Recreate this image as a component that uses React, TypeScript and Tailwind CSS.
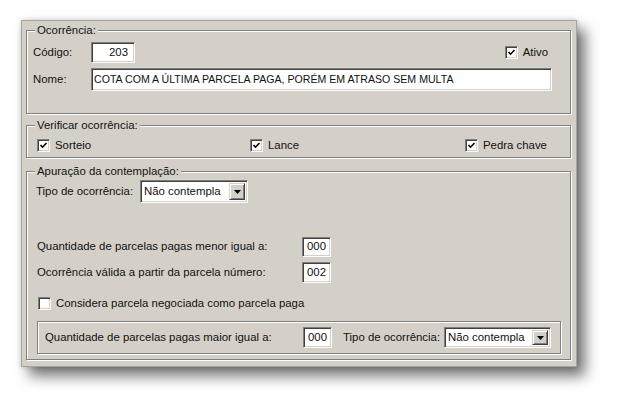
import React from "react";

const font = { fontFamily: '"Liberation Sans", Arial, sans-serif' };

function Check({ checked, label }: { checked?: boolean; label: string }) {
  return (
    <div className="flex items-center gap-[5px]">
      <div className="w-[13px] h-[13px] bg-white border border-t-[#808080] border-l-[#808080] border-b-white border-r-white shadow-[inset_1px_1px_0_#404040,inset_-1px_-1px_0_#d4d0c8] flex items-center justify-center">
        {checked && (
          <svg width="9" height="9" viewBox="0 0 9 9">
            <path d="M1.5 4 L3.5 6.2 L7.5 2" stroke="#000" strokeWidth="1.6" fill="none" />
          </svg>
        )}
      </div>
      <span>{label}</span>
    </div>
  );
}

function Field({ value, className }: { value: string; className: string }) {
  return (
    <div
      className={`bg-white border border-t-[#808080] border-l-[#808080] border-b-white border-r-white shadow-[inset_1px_1px_0_#404040,inset_-1px_-1px_0_#d4d0c8] flex items-center ${className}`}
    >
      {value}
    </div>
  );
}

function Combo({ className }: { className: string }) {
  return (
    <div
      className={`bg-white border border-t-[#808080] border-l-[#808080] border-b-white border-r-white shadow-[inset_1px_1px_0_#404040,inset_-1px_-1px_0_#d4d0c8] flex items-center p-[2px] ${className}`}
    >
      <span className="flex-1 pl-[1px]">Não contempla</span>
      <div className="w-[16px] h-full bg-[#d4d0c8] border border-t-[#d4d0c8] border-l-[#d4d0c8] border-b-[#404040] border-r-[#404040] shadow-[inset_1px_1px_0_#fff,inset_-1px_-1px_0_#808080] flex items-center justify-center">
        <svg width="7" height="4" viewBox="0 0 7 4">
          <path d="M0 0 H7 L3.5 4 Z" fill="#000" />
        </svg>
      </div>
    </div>
  );
}

function Group({
  title,
  className,
  children,
}: {
  title: string;
  className: string;
  children: React.ReactNode;
}) {
  return (
    <div
      className={`relative border border-[#808080] shadow-[1px_1px_0_#fff,inset_1px_1px_0_#fff] ${className}`}
    >
      <span className="absolute -top-[7px] left-[8px] px-[2px] bg-[#d4d0c8] leading-[13px]">
        {title}
      </span>
      {children}
    </div>
  );
}

export default function App() {
  return (
    <div className="w-[619px] h-[409px] bg-white overflow-hidden pt-[20px] pl-[21px]" style={font}>
      <div className="w-[556px] h-[347px] bg-[#d4d0c8] border border-[#a8a49c] shadow-[0_0_5px_rgba(0,0,0,0.18),8px_9px_13px_rgba(0,0,0,0.55)] pt-[9px] px-[4px] text-[11.4px] text-[#111] flex flex-col">
        {/* Ocorrência */}
        <Group title="Ocorrência:" className="h-[84px] w-[545px] pt-[11px] pl-[6px] pr-[18px]">
          <div className="flex items-center h-[21px]">
            <span className="w-[58px]">Código:</span>
            <Field value="203" className="w-[44px] h-[21px] justify-end pr-[6px]" />
            <div className="ml-auto mr-[4px]">
              <Check checked label="Ativo" />
            </div>
          </div>
          <div className="flex items-center mt-[5px]">
            <span className="w-[58px]">Nome:</span>
            <Field
              value="COTA COM A ÚLTIMA PARCELA PAGA, PORÉM EM ATRASO SEM MULTA"
              className="flex-1 h-[23px] pl-[2px] text-[10.6px]"
            />
          </div>
        </Group>

        {/* Verificar ocorrência */}
        <Group title="Verificar ocorrência:" className="mt-[11px] h-[33px] w-[545px] pt-[11px] pl-[10px]">
          <div className="flex items-center">
            <div className="w-[213px]">
              <Check checked label="Sorteio" />
            </div>
            <div className="w-[215px]">
              <Check checked label="Lance" />
            </div>
            <Check checked label="Pedra chave" />
          </div>
        </Group>

        {/* Apuração */}
        <Group title="Apuração da contemplação:" className="mt-[13px] h-[189px] w-[545px] pt-[8px] pl-[9px]">
          <div className="flex items-center">
            <span className="w-[104px]">Tipo de ocorrência:</span>
            <Combo className="w-[108px] h-[23px]" />
          </div>
          <div className="flex items-center mt-[34px] pl-[1px]">
            <span className="w-[265px]">Quantidade de parcelas pagas menor igual a:</span>
            <Field value="000" className="w-[29px] h-[20px] justify-end pr-[4px]" />
          </div>
          <div className="flex items-center mt-[5px] pl-[1px]">
            <span className="w-[265px]">Ocorrência válida a partir da parcela número:</span>
            <Field value="002" className="w-[29px] h-[21px] justify-end pr-[4px]" />
          </div>
          <div className="mt-[12px] pl-[2px]">
            <Check label="Considera parcela negociada como parcela paga" />
          </div>
          <div className="mt-[9px] ml-[1px] w-[524px] h-[33px] border border-[#808080] shadow-[1px_1px_0_#fff,inset_1px_1px_0_#fff] flex items-center pl-[7px]">
            <span className="w-[258px]">Quantidade de parcelas pagas maior igual a:</span>
            <Field value="000" className="w-[29px] h-[21px] justify-end pr-[4px]" />
            <span className="ml-[11px] w-[101px]">Tipo de ocorrência:</span>
            <Combo className="w-[107px] h-[21px]" />
          </div>
        </Group>
      </div>
    </div>
  );
}
